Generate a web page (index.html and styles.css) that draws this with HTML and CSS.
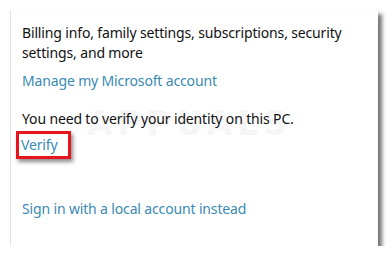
FILE: index.html
```html
<!DOCTYPE html>
<html lang="en">
<head>
  <meta charset="UTF-8">
  <title>Your account</title>
  <link rel="stylesheet" href="styles.css">
</head>
<body>
  <div class="panel">
    <div class="watermark">APPUALS</div>
    <p class="desc">Billing info, family settings, subscriptions, security settings, and more</p>
    <a href="#" class="link manage">Manage my Microsoft account</a>
    <p class="notice">You need to verify your identity on this PC.</p>
    <a href="#" class="link verify">Verify</a>
    <a href="#" class="link local">Sign in with a local account instead</a>
  </div>
</body>
</html>
```

FILE: styles.css
```css
body {
  margin: 0;
  background-color: #fff;
  font-family: "Noto Sans", "Open Sans", sans-serif;
  font-size: 14px;
  letter-spacing: -0.15px;
  color: #111;
}

.panel {
  position: relative;
  display: flex;
  flex-direction: column;
  align-items: flex-start;
  margin: 10px 0 0 10px;
  width: 368px;
  height: 236px;
  padding: 0 11px;
  box-sizing: border-box;
  background-color: #fff;
  border-left: 1px solid #e4e4e4;
  box-shadow: 4px 4px 4px rgba(0, 0, 0, 0.55);
}

.watermark {
  position: absolute;
  left: 76px;
  top: 94px;
  font-family: "DejaVu Sans", sans-serif;
  font-weight: bold;
  font-size: 33px;
  letter-spacing: 5px;
  color: #f6f6f6;
}

.desc,
.notice {
  position: relative;
  margin: 0;
  line-height: 20px;
}

.desc {
  margin-top: 13px;
}

.link {
  position: relative;
  color: #3a8ab3;
  text-decoration: none;
  line-height: 20px;
}

.manage {
  margin-top: 8px;
}

.notice {
  margin-top: 18px;
}

.verify {
  margin: 2px 0 0 -6px;
  padding: 1px 11px 1px 2px;
  border: 3px solid #e8141b;
  box-shadow: 2px 3px 4px rgba(0, 0, 0, 0.45);
}

.local {
  margin-top: 40px;
}
```
